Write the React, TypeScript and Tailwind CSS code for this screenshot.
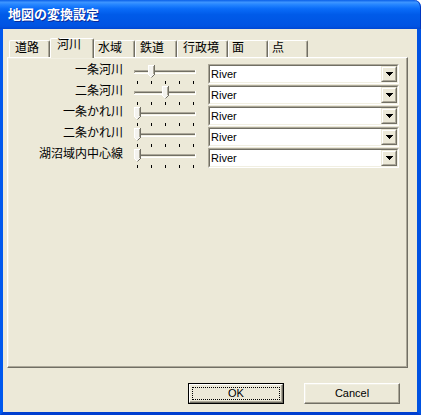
import React from "react";

const tabs = [
  { label: "道路", cls: "w-[41px] pl-[5px]" },
  { label: "河川", cls: "w-[44px] pl-[6px]", selected: true },
  { label: "水域", cls: "w-[41px] pl-[3px]" },
  { label: "鉄道", cls: "w-[42px] pl-[4px]" },
  { label: "行政境", cls: "w-[51px] pl-[5px]" },
  { label: "面", cls: "w-[40px] pl-[3px]" },
  { label: "点", cls: "w-[40px] pl-[3px]" },
];

const rows = [
  { label: "一条河川", v: 1 },
  { label: "二条河川", v: 2 },
  { label: "一条かれ川", v: 0 },
  { label: "二条かれ川", v: 0 },
  { label: "湖沼域内中心線", v: 0 },
];

function Slider({ v }: { v: number }) {
  const tx = 4 + 14 * v;
  const ticks = [7, 21, 35, 49, 63];
  return (
    <svg width="70" height="20" viewBox="0 0 70 20" className="block shrink-0" shapeRendering="crispEdges">
      <rect x="4" y="6" width="62" height="1" fill="#aca899" />
      <rect x="4" y="6" width="1" height="4" fill="#aca899" />
      <rect x="5" y="7" width="60" height="1" fill="#716f64" />
      <rect x="5" y="7" width="1" height="2" fill="#716f64" />
      <rect x="5" y="8" width="60" height="1" fill="#f1efe2" />
      <rect x="4" y="9" width="62" height="1" fill="#ffffff" />
      <rect x="65" y="6" width="1" height="4" fill="#ffffff" />
      {ticks.map((t) => (
        <rect key={t} x={t} y="17" width="1" height="3" fill="#000000" />
      ))}
      <polygon
        points={`${tx},1 ${tx + 7},1 ${tx + 7},10 ${tx + 3.5},13.5 ${tx},10`}
        fill="#f4f3ee"
        shapeRendering="auto"
      />
      <path d={`M${tx + 0.5} 10.5 V1.5 H${tx + 6}`} stroke="#ffffff" fill="none" />
      <path d={`M${tx + 0.5} 10.5 L${tx + 3.5} 13.5`} stroke="#ffffff" fill="none" shapeRendering="auto" />
      <path d={`M${tx + 6.5} 1 V10.5`} stroke="#716f64" fill="none" />
      <path d={`M${tx + 6.5} 10.5 L${tx + 3.5} 13.5`} stroke="#716f64" fill="none" shapeRendering="auto" />
      <path d={`M${tx + 5.5} 2 V10`} stroke="#aca899" fill="none" />
    </svg>
  );
}

function Combo() {
  return (
    <div className="w-[191px] h-[20px] shrink-0 border border-t-[#aca899] border-l-[#aca899] border-b-white border-r-white">
      <div className="h-full flex items-stretch bg-white border border-t-[#716f64] border-l-[#716f64] border-b-[#f1efe2] border-r-[#f1efe2]">
        <div className="flex-1 flex items-center pl-[1px] text-[11px] leading-none text-black">River</div>
        <div className="w-[16px] shrink-0 border border-t-[#ece9d8] border-l-[#ece9d8] border-b-[#716f64] border-r-[#716f64]">
          <div className="h-full flex items-center justify-center bg-[#ece9d8] border border-t-white border-l-white border-b-[#aca899] border-r-[#aca899]">
            <svg width="7" height="4" viewBox="0 0 7 4" className="block" shapeRendering="crispEdges">
              <rect x="0" y="0" width="7" height="1" fill="#000" />
              <rect x="1" y="1" width="5" height="1" fill="#000" />
              <rect x="2" y="2" width="3" height="1" fill="#000" />
              <rect x="3" y="3" width="1" height="1" fill="#000" />
            </svg>
          </div>
        </div>
      </div>
    </div>
  );
}

export default function App() {
  return (
    <div className="w-[421px] h-[415px] flex flex-col bg-white [font-family:'Liberation_Sans','Noto_Sans_CJK_JP',sans-serif] select-none">
      {/* Title bar */}
      <div className="h-[29px] shrink-0 flex items-center pl-[8px] rounded-tr-[7px] bg-[linear-gradient(to_bottom,#0a5fe8_0%,#3d95ff_8%,#2585ff_16%,#0a6cf8_30%,#005be9_50%,#0056e5_75%,#0053e2_90%,#0046d3_100%)] shadow-[inset_-1px_0_0_#0037c0]">
        <span className="text-[13px] font-bold leading-none text-white [text-shadow:1px_1px_0_#0a2a9a]">
          地図の変換設定
        </span>
      </div>

      {/* Body */}
      <div className="flex-1 flex flex-col bg-[#ece9d8] border-l-[3px] border-r-[4px] border-b-[3px] border-l-[#0058ee] border-r-[#0052e2] border-b-[#003fd0]">
        {/* Tabs */}
        <div className="flex items-end pt-[9px] ml-[6px] h-[28px] box-border">
          {tabs.map((t) =>
            t.selected ? (
              <div
                key={t.label}
                className={`${t.cls} relative z-10 h-[20px] mb-[-1px] bg-[#ece9d8] rounded-t-[2px] border-l border-t border-r border-l-white border-t-white border-r-[#716f64] shadow-[inset_-1px_0_0_#aca899] text-[12px] leading-[13px] text-black`}
              >
                {t.label}
              </div>
            ) : (
              <div
                key={t.label}
                className={`${t.cls} h-[17px] bg-[#ece9d8] rounded-t-[2px] border-l border-t border-r border-l-white border-t-white border-r-[#716f64] shadow-[inset_-1px_0_0_#aca899] text-[12px] leading-[14px] text-black`}
              >
                {t.label}
              </div>
            )
          )}
        </div>

        {/* Panel */}
        <div className="ml-[4px] w-[401px] h-[311px] border border-t-white border-l-white border-r-[#716f64] border-b-[#716f64] shadow-[inset_-1px_-1px_0_#aca899,inset_1px_1px_0_#f1efe2] flex flex-col gap-[1px] pt-[6px] pl-[1px]">
          {rows.map((r) => (
            <div key={r.label} className="flex items-start h-[20px]">
              <div className="w-[114px] shrink-0 text-right text-[12px] leading-[13px] text-black">{r.label}</div>
              <div className="ml-[7px]">
                <Slider v={r.v} />
              </div>
              <div className="ml-[8px]">
                <Combo />
              </div>
            </div>
          ))}
        </div>

        {/* Buttons */}
        <div className="flex justify-end gap-[20px] mt-[15px] pr-[17px]">
          <div className="w-[96px] h-[21px] border border-black">
            <div className="h-full border border-t-white border-l-white border-b-[#716f64] border-r-[#716f64] shadow-[inset_-1px_-1px_0_#aca899]">
              <div className="h-full m-0 p-[2px]">
                <div className="h-full border border-dotted border-black flex items-center justify-center text-[11px] leading-none text-black">
                  OK
                </div>
              </div>
            </div>
          </div>
          <div className="w-[96px] h-[21px] border border-t-white border-l-white border-b-[#716f64] border-r-[#716f64] shadow-[inset_-1px_-1px_0_#aca899,inset_1px_1px_0_#f1efe2] flex items-center justify-center text-[11px] leading-none text-black">
            Cancel
          </div>
        </div>
      </div>
    </div>
  );
}
